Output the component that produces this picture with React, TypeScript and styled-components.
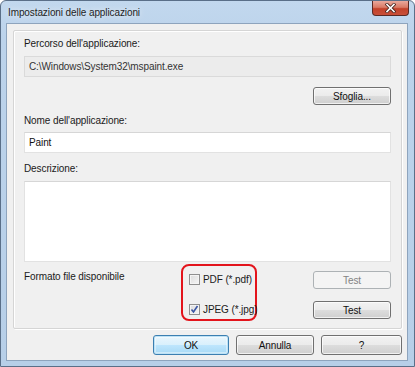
import React from "react";
import styled, { createGlobalStyle, css } from "styled-components";

const Global = createGlobalStyle`
  html, body { margin: 0; padding: 0; background: #fff; }
  body { font-family: "Liberation Sans", Arial, sans-serif; font-size: 10px; letter-spacing: -0.1px; color: #000; }
  * { box-sizing: border-box; }
`;

const Window = styled.div`
  width: 415px;
  height: 367px;
  display: flex;
  flex-direction: column;
  background: linear-gradient(180deg, #c2d8ee 0%, #bcd3eb 10%, #b7cfe8 100%);
  border: 1px solid #5a6f88;
  border-radius: 6px 6px 0 0;
  padding: 0 6px 5px 5px;
`;

const TitleBar = styled.div`
  height: 23px;
  display: flex;
  align-items: flex-start;
  justify-content: space-between;
`;

const Title = styled.span`
  margin-top: 6px;
  margin-left: 2px;
  font-size: 10px;
  color: #1e1e1e;
  white-space: nowrap;
  text-shadow: 0 0 6px rgba(255, 255, 255, 0.9);
`;

const CloseButton = styled.div`
  width: 37px;
  height: 15px;
  margin-right: -1px;
  border: 1px solid #5b2a24;
  border-top: none;
  border-radius: 0 0 4px 4px;
  background: linear-gradient(180deg, #e9a99c 0%, #d97a66 45%, #c2412a 55%, #c8503a 100%);
  display: flex;
  align-items: center;
  justify-content: center;
`;

const Client = styled.div`
  flex: 1;
  display: flex;
  flex-direction: column;
  background: #f0f0f0;
  border: 1px solid #8ea4bd;
  padding: 6px 5px 5px 6px;
`;

const Group = styled.div`
  height: 299px;
  border: 1px solid #d5d5d5;
  box-shadow: inset 1px 1px 0 #fff, 1px 1px 0 #fff;
  border-radius: 2px;
  padding: 4px 10px 0 10px;
  display: flex;
  flex-direction: column;
`;

const Label = styled.div<{ $mt?: number }>`
  height: 18px;
  line-height: 18px;
  margin-top: ${(p) => p.$mt ?? 0}px;
  color: #1a1a1a;
  white-space: nowrap;
`;

const Field = styled.div<{ $disabled?: boolean; $h?: number; $mt?: number }>`
  height: ${(p) => p.$h ?? 21}px;
  margin-top: ${(p) => p.$mt ?? 0}px;
  width: 367px;
  border: 1px solid ${(p) => (p.$disabled ? "#dadada" : "#e2e2e2")};
  background: ${(p) => (p.$disabled ? "#ececec" : "#fff")};
  padding: 0 4px;
  line-height: 19px;
  color: ${(p) => (p.$disabled ? "#333" : "#111")};
  white-space: nowrap;
  ${(p) =>
    !p.$disabled &&
    css`
      border-top-color: #d6d6d6;
    `}
`;

const RightRow = styled.div<{ $mt?: number }>`
  display: flex;
  justify-content: flex-end;
  margin-top: ${(p) => p.$mt ?? 0}px;
  width: 367px;
`;

const Button = styled.div<{ $w?: number; $h?: number; $default?: boolean; $disabled?: boolean }>`
  width: ${(p) => p.$w ?? 78}px;
  height: ${(p) => p.$h ?? 18}px;
  border-radius: 3px;
  border: 1px solid #707070;
  background: linear-gradient(180deg, #f2f2f2 0%, #ebebeb 49%, #dddddd 50%, #cfcfcf 100%);
  box-shadow: inset 0 0 0 1px rgba(255, 255, 255, 0.7);
  display: flex;
  align-items: center;
  justify-content: center;
  color: #111;
  white-space: nowrap;
  ${(p) =>
    p.$default &&
    css`
      border-color: #3c7fb1;
      background: linear-gradient(180deg, #eaf6fd 0%, #d9f0fc 49%, #bee6fd 50%, #a7d9f5 100%);
      box-shadow: inset 0 0 0 1px #bde2f6, inset 0 0 0 2px rgba(255, 255, 255, 0.4);
    `}
  ${(p) =>
    p.$disabled &&
    css`
      border-color: #adb2b5;
      background: #f4f4f4;
      box-shadow: none;
      color: #838383;
    `}
`;

const FormatRow = styled.div`
  margin-top: 2px;
  display: flex;
  width: 367px;
`;

const FormatLabel = styled.div`
  width: 157px;
  line-height: 18px;
  margin-top: 4px;
  color: #1a1a1a;
  white-space: nowrap;
`;

const Highlight = styled.div`
  width: 76px;
  height: 57px;
  border: 2px solid #e3141c;
  border-radius: 8px;
  padding: 5px 0 0 6px;
  display: flex;
  flex-direction: column;
  gap: 13px;
`;

const Check = styled.div`
  display: flex;
  align-items: center;
  height: 17px;
  gap: 3px;
  color: #1a1a1a;
  white-space: nowrap;
`;

const Box = styled.div`
  width: 11px;
  height: 11px;
  flex: none;
  border: 1px solid #8f8f8f;
  background: linear-gradient(135deg, #dcdcdc 0%, #f6f6f6 100%);
  box-shadow: inset 0 0 0 1px #f4f4f4;
  display: flex;
  align-items: center;
  justify-content: center;
`;

const TestCol = styled.div`
  margin-left: auto;
  margin-top: 7px;
  display: flex;
  flex-direction: column;
  gap: 12px;
`;

const Footer = styled.div`
  display: flex;
  justify-content: flex-end;
  gap: 7px;
  margin-top: 6px;
`;

export default function App() {
  return (
    <>
      <Global />
      <Window>
        <TitleBar>
          <Title>Impostazioni delle applicazioni</Title>
          <CloseButton>
            <svg width="11" height="10" viewBox="0 0 11 10">
              <path d="M2 1.5 L9 8.5 M9 1.5 L2 8.5" stroke="#4a2620" strokeWidth="3.2" strokeLinecap="square" />
              <path d="M2 1.5 L9 8.5 M9 1.5 L2 8.5" stroke="#ffffff" strokeWidth="1.6" strokeLinecap="square" />
            </svg>
          </CloseButton>
        </TitleBar>
        <Client>
          <Group>
            <Label $mt={0}>Percorso dell'applicazione:</Label>
            <Field $disabled $mt={3}>C:\Windows\System32\mspaint.exe</Field>
            <RightRow $mt={10}>
              <Button>Sfoglia...</Button>
            </RightRow>
            <Label $mt={7}>Nome dell'applicazione:</Label>
            <Field $mt={2}>Paint</Field>
            <Label $mt={7}>Descrizione:</Label>
            <Field $h={81} $mt={3} />
            <FormatRow>
              <FormatLabel>Formato file disponibile</FormatLabel>
              <Highlight>
                <Check>
                  <Box />
                  <span>PDF (*.pdf)</span>
                </Check>
                <Check>
                  <Box>
                    <svg width="9" height="9" viewBox="0 0 9 9">
                      <path d="M1.5 4.5 L3.5 7 L7.5 1" fill="none" stroke="#3a55a4" strokeWidth="1.6" />
                    </svg>
                  </Box>
                  <span>JPEG (*.jpg)</span>
                </Check>
              </Highlight>
              <TestCol>
                <Button $disabled>Test</Button>
                <Button>Test</Button>
              </TestCol>
            </FormatRow>
          </Group>
          <Footer>
            <Button $w={76} $h={20} $default>OK</Button>
            <Button $w={78} $h={20}>Annulla</Button>
            <Button $w={81} $h={20}>?</Button>
          </Footer>
        </Client>
      </Window>
    </>
  );
}
